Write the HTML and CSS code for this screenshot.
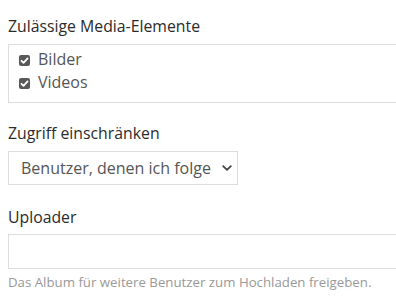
FILE: index.html
```html
<!DOCTYPE html>
<html lang="de">
<head>
<meta charset="utf-8">
<title>Album</title>
<link rel="stylesheet" href="styles.css">
</head>
<body>
<div class="form">
  <div class="group group-media">
    <div class="label">Zulässige Media-Elemente</div>
    <div class="checkbox-box">
      <label class="check"><span class="box"><svg viewBox="0 0 11 11" width="11" height="11"><path d="M2.5 5.8 L4.5 7.8 L8.6 3.4" fill="none" stroke="#fff" stroke-width="1.8" stroke-linecap="round" stroke-linejoin="round"/></svg></span>Bilder</label>
      <label class="check"><span class="box"><svg viewBox="0 0 11 11" width="11" height="11"><path d="M2.5 5.8 L4.5 7.8 L8.6 3.4" fill="none" stroke="#fff" stroke-width="1.8" stroke-linecap="round" stroke-linejoin="round"/></svg></span>Videos</label>
    </div>
  </div>
  <div class="group group-access">
    <div class="label">Zugriff einschränken</div>
    <div class="select">
      <span class="select-text">Benutzer, denen ich folge</span>
      <svg class="chevron" viewBox="0 0 10 6" width="10" height="6"><path d="M1.2 1.2 L5 4.8 L8.8 1.2" fill="none" stroke="#444" stroke-width="1.8" stroke-linecap="round" stroke-linejoin="round"/></svg>
    </div>
  </div>
  <div class="group group-uploader">
    <div class="label">Uploader</div>
    <div class="input"></div>
    <div class="help">Das Album für weitere Benutzer zum Hochladen freigeben.</div>
  </div>
</div>
</body>
</html>
```
FILE: styles.css
```css
html, body {
  margin: 0;
  padding: 0;
  overflow: hidden;
  background: #fff;
}
body {
  font-family: "Open Sans", "Liberation Sans", sans-serif;
  color: #333;
  padding: 15px 0 0 8px;
}
.form {
  width: 420px;
  display: flex;
  flex-direction: column;
}
.group {
  display: flex;
  flex-direction: column;
}
.group-access {
  margin-top: 19px;
}
.group-uploader {
  margin-top: 21px;
}
.label {
  font-size: 15.8px;
  line-height: 22px;
  margin-bottom: 7px;
  color: #2b2b2b;
}
.group-uploader .label {
  margin-bottom: 6px;
}
.checkbox-box {
  border: 1px solid #ddd;
  padding: 3px 10px 8px;
  display: flex;
  flex-direction: column;
}
.check {
  display: flex;
  align-items: center;
  font-size: 16px;
  line-height: 23px;
  color: #555;
}
.box {
  width: 11px;
  height: 11px;
  border-radius: 2px;
  background: #595959;
  margin-right: 8px;
  display: flex;
  margin-top: 1px;
}
.select {
  height: 32px;
  border: 1px solid #ddd;
  display: flex;
  align-items: center;
  justify-content: space-between;
  padding: 0 5px 0 12px;
  width: 211px;
}
.select-text {
  font-size: 16px;
  color: #555;
}
.input {
  height: 33px;
  border: 1px solid #ddd;
}
.help {
  font-size: 13.25px;
  line-height: 18px;
  color: #999;
  margin-top: 4px;
}
```
